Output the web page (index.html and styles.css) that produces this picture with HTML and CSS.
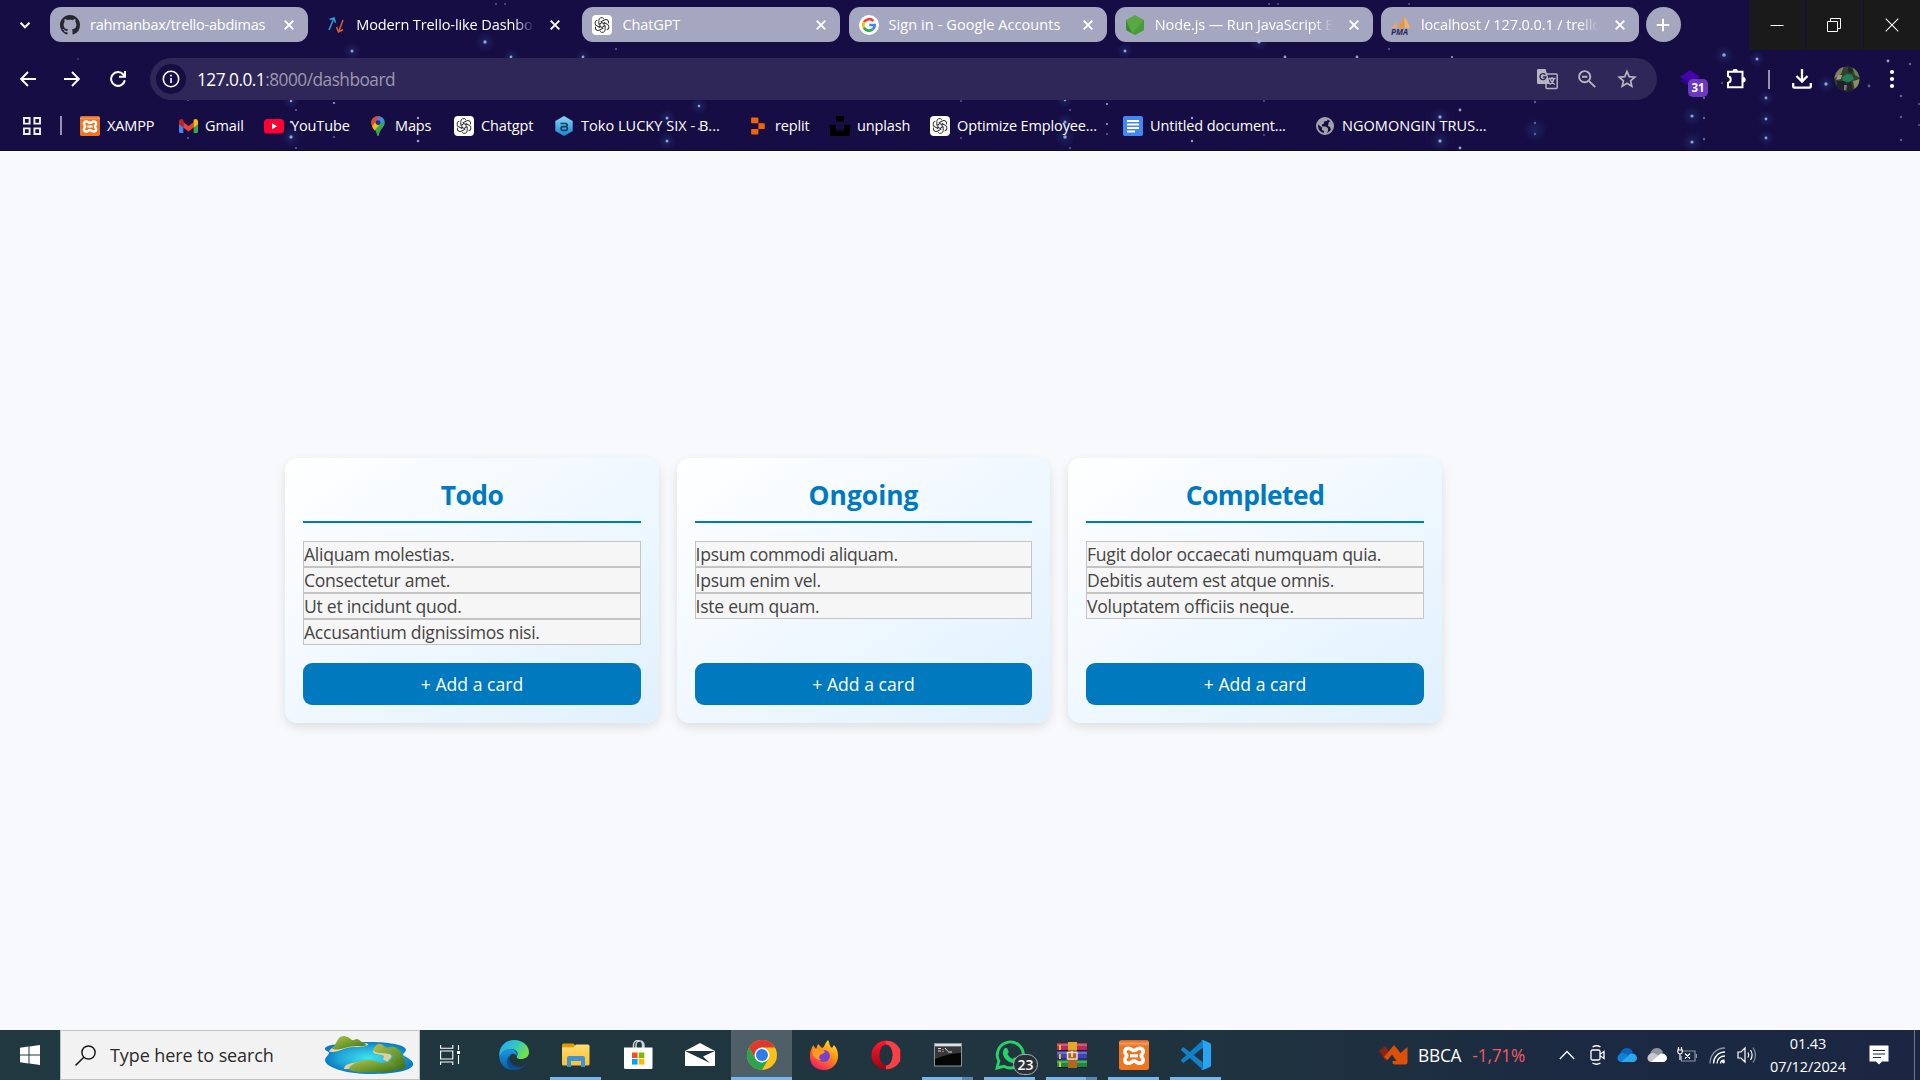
FILE: index.html
```
<!DOCTYPE html>
<html lang="en">
<head>
<meta charset="utf-8">
<title>Modern Trello-like Dashboard</title>
<link rel="stylesheet" href="styles.css">
</head>
<body>
<svg class="defs" width="0" height="0">
  <defs>
    <radialGradient id="glow"><stop offset="0" stop-color="#2f6fc0" stop-opacity=".22"/><stop offset="1" stop-color="#2f6fc0" stop-opacity="0"/></radialGradient>
    <linearGradient id="edge1" x1="0" y1="0" x2="1" y2=".4"><stop offset="0" stop-color="#2aa8ec"/><stop offset=".55" stop-color="#2fc5c8"/><stop offset="1" stop-color="#6fe04a"/></linearGradient>
    <linearGradient id="edge2" x1="0" y1="0" x2="0" y2="1"><stop offset="0" stop-color="#1a9be0"/><stop offset="1" stop-color="#0c58a8"/></linearGradient>
    <linearGradient id="fire" x1=".8" y1="0" x2=".2" y2="1"><stop offset="0" stop-color="#ffe226"/><stop offset=".45" stop-color="#ff8a16"/><stop offset="1" stop-color="#f5156c"/></linearGradient>
    <linearGradient id="opera" x1="0" y1="0" x2="0" y2="1"><stop offset="0" stop-color="#ff1b2d"/><stop offset="1" stop-color="#a70014"/></linearGradient>
    <linearGradient id="folder" x1="0" y1="0" x2="0" y2="1"><stop offset="0" stop-color="#ffdd73"/><stop offset="1" stop-color="#fbc02f"/></linearGradient>
    <linearGradient id="xamppbg" x1="0" y1="0" x2="0" y2="1"><stop offset="0" stop-color="#d5601c"/><stop offset=".12" stop-color="#f39a5c"/><stop offset=".2" stop-color="#ef7420"/><stop offset="1" stop-color="#f0751c"/></linearGradient>
    <radialGradient id="water"><stop offset="0" stop-color="#3fe4ea"/><stop offset=".7" stop-color="#1fa5d8"/><stop offset="1" stop-color="#0b7cc4"/></radialGradient>
    <linearGradient id="hill" x1="0" y1="0" x2="1" y2="1"><stop offset="0" stop-color="#b5c050"/><stop offset=".6" stop-color="#66962b"/><stop offset="1" stop-color="#3f6a1a"/></linearGradient>
    <linearGradient id="toko" x1="0" y1="0" x2="0" y2="1"><stop offset="0" stop-color="#8fd6f5"/><stop offset="1" stop-color="#1287cf"/></linearGradient>
    <symbol id="close" viewBox="0 0 12 12"><path d="M1.7 1.7l8.6 8.6M10.3 1.7l-8.6 8.6" stroke="#fff" stroke-width="1.9" fill="none"/></symbol>
    <symbol id="gpt" viewBox="0 0 20 20">
      <rect width="20" height="20" rx="4" fill="#fff"/>
      <g fill="none" stroke="#2a2a2a" stroke-width=".95" stroke-linejoin="round">
        <path d="M10 7.6L6.8 9.4V5.6A2.9 2.9 0 0 1 11.9 3.6"/>
        <path d="M10 7.6L6.8 9.4V5.6A2.9 2.9 0 0 1 11.9 3.6" transform="rotate(60 10 10)"/>
        <path d="M10 7.6L6.8 9.4V5.6A2.9 2.9 0 0 1 11.9 3.6" transform="rotate(120 10 10)"/>
        <path d="M10 7.6L6.8 9.4V5.6A2.9 2.9 0 0 1 11.9 3.6" transform="rotate(180 10 10)"/>
        <path d="M10 7.6L6.8 9.4V5.6A2.9 2.9 0 0 1 11.9 3.6" transform="rotate(240 10 10)"/>
        <path d="M10 7.6L6.8 9.4V5.6A2.9 2.9 0 0 1 11.9 3.6" transform="rotate(300 10 10)"/>
      </g>
    </symbol>
    <symbol id="xampp" viewBox="0 0 30 30">
      <rect width="30" height="30" rx="2.5" fill="url(#xamppbg)"/>
      <path d="M9.5 8.2c2.800 0 3.300 2.300 5.500 2.300s2.700-2.300 5.500-2.300c2.500 0 3.700 1.700 3.700 3.600 0 2-1.900 2.400-1.900 4s1.900 2 1.900 4c0 1.900-1.200 3.500-3.700 3.500-2.800 0-3.300-2.300-5.500-2.300s-2.700 2.300-5.500 2.300c-2.500 0-3.700-1.600-3.700-3.500 0-2 1.900-2.400 1.900-4s-1.900-2-1.900-4c0-1.900 1.200-3.600 3.700-3.600z" fill="none" stroke="#fff" stroke-width="3.6"/>
      <path d="M11 15.800h8" stroke="#fff" stroke-width="3.2"/>
    </symbol>
  </defs>
</svg>

<header class="browser">
  <svg class="stars" width="1920" height="151" viewBox="0 0 1920 151">
    <g fill="url(#glow)">
      <circle cx="352" cy="51" r="9"/><circle cx="485" cy="42" r="10"/><circle cx="511" cy="57" r="8"/><circle cx="583" cy="57" r="8"/><circle cx="291" cy="101" r="8"/><circle cx="291" cy="137" r="10"/><circle cx="699" cy="106" r="9"/><circle cx="667" cy="118" r="9"/><circle cx="667" cy="141" r="9"/><circle cx="1065" cy="100" r="8"/><circle cx="1065" cy="122" r="9"/><circle cx="1065" cy="137" r="10"/><circle cx="1125" cy="51" r="8"/><circle cx="1259" cy="42" r="9"/><circle cx="1440" cy="117" r="10"/><circle cx="1440" cy="141" r="10"/><circle cx="1724" cy="55" r="10"/><circle cx="1757" cy="59" r="8"/><circle cx="1692" cy="116" r="10"/><circle cx="1692" cy="142" r="10"/><circle cx="1766" cy="98" r="8"/><circle cx="1766" cy="119" r="8"/><circle cx="1766" cy="138" r="8"/><circle cx="1826" cy="84" r="9"/><circle cx="1535" cy="130" r="12"/>
    </g>
    <g fill="#9a9fd2">
      <circle cx="352" cy="51" r="1.500"/><circle cx="485" cy="42" r="1.700"/><circle cx="511" cy="57" r="1.400"/><circle cx="583" cy="57" r="1.400"/><circle cx="291" cy="101" r="1.300"/><circle cx="291" cy="137" r="1.700"/><circle cx="291" cy="122" r="1.300"/><circle cx="418" cy="118" r="1.200"/><circle cx="418" cy="141" r="1.300"/><circle cx="334" cy="103" r="1.100"/><circle cx="699" cy="106" r="1.300"/><circle cx="667" cy="118" r="1.500"/><circle cx="667" cy="141" r="1.500"/><circle cx="699" cy="129" r="1.200"/><circle cx="1065" cy="100" r="1.300"/><circle cx="1065" cy="122" r="1.600"/><circle cx="1065" cy="137" r="1.700"/><circle cx="1125" cy="51" r="1.500"/><circle cx="1107" cy="104" r="1.100"/><circle cx="1107" cy="124" r="1.100"/><circle cx="1192" cy="118" r="1.200"/><circle cx="1192" cy="141" r="1.200"/><circle cx="1259" cy="42" r="1.600"/><circle cx="1285" cy="57" r="1.400"/><circle cx="1357" cy="57" r="1.400"/><circle cx="1440" cy="117" r="1.700"/><circle cx="1440" cy="141" r="1.700"/><circle cx="1460" cy="110" r="1.400"/><circle cx="1460" cy="148" r="1.400"/><circle cx="1452" cy="57" r="1.100"/><circle cx="1724" cy="55" r="1.800"/><circle cx="1757" cy="59" r="1.500"/><circle cx="1692" cy="116" r="1.600"/><circle cx="1692" cy="142" r="1.600"/><circle cx="1766" cy="98" r="1.400"/><circle cx="1766" cy="119" r="1.400"/><circle cx="1766" cy="138" r="1.400"/><circle cx="1888" cy="61" r="1.400"/><circle cx="1826" cy="84" r="1.700"/>
    </g>
    <g fill="#5c5f9c">
      <circle cx="188" cy="100" r="1"/><circle cx="188" cy="138" r="1.100"/><circle cx="334" cy="137" r="1.100"/><circle cx="296" cy="110" r="1.100"/><circle cx="296" cy="148" r="1.100"/><circle cx="78" cy="59" r=".8"/><circle cx="616" cy="49" r="1.100"/><circle cx="1389" cy="49" r="1.100"/><circle cx="1070" cy="110" r="1.100"/><circle cx="1070" cy="148" r="1.100"/><circle cx="961" cy="101" r=".9"/><circle cx="961" cy="138" r=".9"/><circle cx="1107" cy="134" r="1.100"/><circle cx="1264" cy="101" r=".9"/><circle cx="1264" cy="135" r=".9"/><circle cx="1269" cy="4" r=".9"/><circle cx="1278" cy="4" r=".9"/><circle cx="1409" cy="4" r=".9"/><circle cx="496" cy="4" r=".9"/><circle cx="505" cy="4" r=".9"/><circle cx="1535" cy="102" r="1.200"/><circle cx="1535" cy="123" r="1.200"/><circle cx="1535" cy="134" r="1.200"/><circle cx="1704" cy="118" r="1.200"/><circle cx="1704" cy="139" r="1.200"/><circle cx="1704" cy="98" r="1.200"/><circle cx="1722" cy="83" r="1"/><circle cx="1869" cy="86" r="1.400"/><circle cx="1910" cy="64" r="1.300"/><circle cx="1901" cy="96" r="1.300"/><circle cx="1901" cy="117" r="1.200"/><circle cx="1901" cy="140" r="1.200"/><circle cx="1919" cy="104" r="1"/><circle cx="1919" cy="125" r="1"/>
    </g>
  </svg>

  <div class="tabstrip">
    <div class="tab-search"><svg width="14" height="14" viewBox="0 0 14 14"><path d="M2.500 4.800L7 9.300l4.500-4.500" fill="none" stroke="#fff" stroke-width="2"/></svg></div>
    <div class="tabs">
      <div class="tab">
        <svg class="fav" viewBox="0 0 16 16"><path fill="#24292f" d="M8 0C3.580 0 0 3.580 0 8c0 3.540 2.290 6.530 5.470 7.590.4.070.55-.17.55-.38 0-.19-.010-.82-.010-1.490-2.010.37-2.530-.49-2.690-.94-.090-.23-.48-.94-.82-1.130-.28-.15-.68-.52-.010-.53.63-.010 1.080.58 1.230.82.72 1.210 1.870.87 2.330.66.070-.52.28-.87.51-1.070-1.780-.2-3.640-.89-3.640-3.950 0-.87.31-1.590.82-2.150-.080-.2-.36-1.020.080-2.120 0 0 .67-.21 2.200.82.640-.18 1.320-.27 2-.27s1.360.090 2 .27c1.530-1.040 2.200-.82 2.200-.82.440 1.100.16 1.920.080 2.120.51.560.82 1.270.82 2.150 0 3.070-1.870 3.750-3.650 3.950.29.25.54.73.54 1.480 0 1.070-.010 1.930-.010 2.200 0 .21.15.46.55.38A8.010 8.010 0 0 0 16 8c0-4.420-3.580-8-8-8z"/></svg>
        <span class="tab-title snug">rahmanbax/trello-abdimas</span><svg class="x"><use href="#close"/></svg>
      </div>
      <div class="tab active">
        <svg class="fav" viewBox="0 0 20 20" fill="none" stroke-width="1.500"><path d="M3 15L8 3M3.600 4.500L8 3l1.500 4.800" stroke="#28a3d0"/><path d="M17 5l-4.500 12M10.500 12l2 5 4.500-2.500" stroke="#d85f33"/></svg>
        <span class="tab-title fade">Modern Trello-like Dashboard</span><svg class="x"><use href="#close"/></svg>
      </div>
      <div class="tab">
        <svg class="fav"><use href="#gpt"/></svg>
        <span class="tab-title">ChatGPT</span><svg class="x"><use href="#close"/></svg>
      </div>
      <div class="tab">
        <svg class="fav" viewBox="0 0 20 20" fill="none" stroke-width="2.700"><circle cx="10" cy="10" r="10" fill="#fff"/><path d="M14.300 6A5.800 5.800 0 0 0 5 7.200" stroke="#ea4335"/><path d="M5 7.200a5.800 5.800 0 0 0 0 5.600" stroke="#fbbc05"/><path d="M5 12.800a5.800 5.800 0 0 0 8.800 1.500" stroke="#34a853"/><path d="M13.800 14.300A5.600 5.600 0 0 0 15.700 10H10.300" stroke="#4285f4"/></svg>
        <span class="tab-title wide">Sign in - Google Accounts</span><svg class="x"><use href="#close"/></svg>
      </div>
      <div class="tab">
        <svg class="fav" viewBox="0 0 20 20"><path d="M10 0l9 5v10l-9 5-9-5V5z" fill="#58a942"/><path d="M1 5l6.500 13.600L1 15z" fill="#3c8a38"/><path d="M19 5L7.500 18.600 10 20l9-5z" fill="#489a3c"/></svg>
        <span class="tab-title fade">Node.js — Run JavaScript Everywhere</span><svg class="x"><use href="#close"/></svg>
      </div>
      <div class="tab">
        <svg class="fav pma" viewBox="0 0 20 20"><path d="M5.500 4.500C5.500 8 3.500 11 1 13h5z" fill="#f3a64a"/><path d="M12 0c0 5-2.500 10-5 13h6z" fill="#f6941e"/><path d="M13 2c3 3 5 7 6 11h-5z" fill="#f7b260"/><text x="0" y="19.500" class="pma-text">PMA</text></svg>
        <span class="tab-title fade">localhost / 127.0.0.1 / trello_abdimas</span><svg class="x"><use href="#close"/></svg>
      </div>
    </div>
    <div class="new-tab"><svg width="14" height="14" viewBox="0 0 14 14"><path d="M7 .8v12.400M.8 7h12.400" stroke="#fff" stroke-width="2"/></svg></div>
    <div class="window-controls">
      <div><svg width="14" height="14" viewBox="0 0 14 14"><path d="M.5 7.500h13" stroke="#fff"/></svg></div>
      <div><svg width="14" height="14" viewBox="0 0 14 14" fill="none" stroke="#fff"><path d="M.5 3.500h10v10H.5zM3.500 3.500v-3h10v10h-3"/></svg></div>
      <div><svg width="14" height="14" viewBox="0 0 14 14"><path d="M.7.7l12.600 12.600M13.300.7L.7 13.300" stroke="#fff" stroke-width="1.100"/></svg></div>
    </div>
  </div>

  <div class="toolbar">
    <div class="nav"><svg width="16" height="16" viewBox="0 0 16 16" fill="none" stroke="#fff" stroke-width="1.900"><path d="M16 8H1.500M8 1L1.200 8 8 15"/></svg></div>
    <div class="nav"><svg width="16" height="16" viewBox="0 0 16 16" fill="none" stroke="#fff" stroke-width="1.900"><path d="M0 8h14.500M8 1l6.800 7L8 15"/></svg></div>
    <div class="nav reload"><svg width="16" height="16" viewBox="0 0 16 16" fill="none" stroke="#fff" stroke-width="2"><path d="M14.800 9.200a6.900 6.900 0 1 1-1.500-5.700L15 5.400M15 0v5.800H9"/></svg></div>
    <div class="omnibox">
      <div class="info"><svg width="18" height="18" viewBox="0 0 18 18"><circle cx="9" cy="9" r="7.700" fill="none" stroke="#fff" stroke-width="1.600"/><path d="M9 8v5M9 4.800v1.800" stroke="#fff" stroke-width="1.600"/></svg></div>
      <div class="url">127.0.0.1<span>:8000/dashboard</span></div>
      <div class="omni-icon"><svg width="21" height="21" viewBox="0 0 21 21"><rect x="9" y="5" width="11.200" height="14.500" rx="1" fill="none" stroke="#b8b5c2" stroke-width="1.500"/><path d="M1.500 0h7l4.600 15H1.500A1.300 1.300 0 0 1 0 13.700V1.300A1.300 1.300 0 0 1 1.500 0z" fill="#b8b5c2"/><path d="M8.300 5.700A3 3 0 1 0 9 8H6" fill="none" stroke="#2e2757" stroke-width="1.400"/><path d="M11.500 9.500h7M15 8v1.500M17 9.500c-.7 3-2.500 5-4.500 6M13 10c1 2.500 2.500 4 4.800 5.500" fill="none" stroke="#b8b5c2" stroke-width="1.300"/></svg></div>
      <div class="omni-icon"><svg width="18" height="18" viewBox="0 0 18 18" fill="none" stroke="#b8b5c2" stroke-width="1.900"><circle cx="6.700" cy="6.700" r="5.600"/><path d="M10.800 10.800l6.400 6.400M4 6.700h5.400"/></svg></div>
      <div class="omni-icon"><svg width="20" height="20" viewBox="0 0 20 20" fill="none" stroke="#b8b5c2" stroke-width="1.700"><path d="M10 2.500l2.200 5.100 5.600.5-4.200 3.700 1.200 5.400-4.800-2.900-4.800 2.900 1.200-5.400L2.200 8.100l5.600-.5z"/></svg></div>
    </div>
    <div class="ext"><svg width="20" height="16" viewBox="0 0 20 16"><path d="M0 11l10-6 10 6-10 5z" fill="#240b88"/><path d="M10 0l10 7-10 6L0 7z" fill="#4406aa"/></svg><span class="ext-count">31</span></div>
    <div class="puzzle"><svg width="21" height="21" viewBox="0 0 21 21"><path d="M2 2.800h14.500v15.400H2v-4.400c3.600-.5 3.600-6.100 0-6.600z" fill="none" stroke="#fff" stroke-width="2"/><path d="M6.500 2.500a2.700 2.700 0 0 1 5.400 0zM17 8a2.700 2.700 0 0 1 0 5.400z" fill="#fff"/></svg></div>
    <div class="sep"></div>
    <div class="download"><svg width="20" height="20" viewBox="0 0 20 20" fill="none" stroke="#fff" stroke-width="2.300"><path d="M10 0v12M4.500 7l5.500 5.500L15.500 7M1.200 14v3.500q0 1.200 1.200 1.200h15.200q1.200 0 1.200-1.200V14"/></svg></div>
    <div class="avatar"><svg width="26" height="26" viewBox="0 0 26 26"><clipPath id="face"><circle cx="13" cy="13" r="12.500"/></clipPath><g clip-path="url(#face)"><rect width="26" height="26" fill="#34402e"/><path d="M0 0h10l-3 8-7 5z" fill="#80805a"/><path d="M18 0h8v12l-5-3z" fill="#68845a"/><path d="M14 1l5 2-1 4-4-1z" fill="#1b2a1c"/><path d="M8 11l5-3 5 1 2 4-5 3-6-1z" fill="#1f7f58"/><path d="M3 15l7 0 3 4-3 7H3z" fill="#20212c"/><path d="M13 17l4-1 2 10h-6z" fill="#24222c"/><path d="M19 15l7-2v9l-5 3z" fill="#829262"/><path d="M4 9l4 0-1 4-5 1z" fill="#a49584"/><path d="M10 19l3 0-1 5h-2z" fill="#7f776c"/></g></svg></div>
    <div class="menu"><svg width="6" height="20" viewBox="0 0 6 20" fill="#fff"><circle cx="3" cy="3" r="2.100"/><circle cx="3" cy="10" r="2.100"/><circle cx="3" cy="17" r="2.100"/></svg></div>
  </div>

  <div class="bookmarks">
    <div class="apps"><svg width="18" height="18" viewBox="0 0 18 18" fill="none" stroke="#f4f2fb" stroke-width="1.900"><path d="M1 1h5.600v5.600H1zM11.400 1H17v5.600h-5.600zM1 11.400h5.600V17H1zM11.400 11.400H17V17h-5.600z"/></svg><i></i></div>
    <div class="bm"><svg width="20" height="20"><use href="#xampp"/></svg>XAMPP</div>
    <div class="bm"><svg width="19" height="20" viewBox="0 0 19 20"><path d="M0 5h4.300v12H1.500A1.500 1.500 0 0 1 0 15.500z" fill="#4285f4"/><path d="M14.700 5H19v10.500a1.500 1.500 0 0 1-1.500 1.500h-2.800z" fill="#34a853"/><path d="M4.300 6l5.200 4 5.200-4v5.500l-5.200 4-5.200-4z" fill="#ea4335"/><path d="M0 5.500C0 3 2.500 2.300 4.300 3.700V11.500L0 8.200z" fill="#c5221f"/><path d="M19 5.500c0-2.500-2.500-3.200-4.300-1.800v7.800L19 8.200z" fill="#fbbc04"/></svg>Gmail</div>
    <div class="bm"><svg width="20" height="20" viewBox="0 0 20 20"><rect y="3" width="20" height="14.500" rx="3.500" fill="#ff0033"/><path d="M8 7.200v6l5-3z" fill="#fff"/></svg>YouTube</div>
    <div class="bm"><svg width="20" height="20" viewBox="0 0 20 20"><path d="M3.200 6.500C3.200 3 6.200.3 10 .3s6.800 2.700 6.800 6.200c0 4.800-5.200 6.500-6 13.200h-1.600C8.400 13 3.200 11.300 3.200 6.500z" fill="#34a853"/><path d="M4 9.500L9 3l2.500 6-5 5.500C5.300 13 4.400 11.500 4 9.500z" fill="#fbbc04"/><path d="M5 2.500A7 7 0 0 1 12 .6L4.300 10C3 7.500 3 4.600 5 2.500z" fill="#ea4335"/><path d="M12 .6a6.800 6.800 0 0 1 4.300 3.400L11 9.500 7 6z" fill="#4285f4"/><circle cx="10" cy="6.600" r="2.400" fill="#1b2f86"/></svg>Maps</div>
    <div class="bm"><svg width="20" height="20"><use href="#gpt"/></svg>Chatgpt</div>
    <div class="bm loose"><svg width="20" height="20" viewBox="0 0 20 20"><path d="M10 0l8.700 5v10L10 20l-8.700-5V5z" fill="url(#toko)"/><path d="M6.500 7.500h5.500q2.200 1.200.5 3 1.800 2 0 3.800H8q-2-1.800 0-3.600h4" fill="none" stroke="#0b3f66" stroke-width="1.700"/></svg>Toko LUCKY SIX - B...</div>
    <div class="bm"><svg width="20" height="20" viewBox="0 0 20 20" fill="#f26207"><path d="M4 1.500h5.500q.9 0 .9.900v4.900H4q-.9 0-.9-.9v-4q0-.9.900-.9zM10.400 7.300h5.500q.9 0 .9.900v4q0 .9-.9.900h-5.500zM4 13.100h6.400v4.500q0 .9-.9.900H4q-.9 0-.9-.9v-3.600q0-.9.900-.9z"/></svg>replit</div>
    <div class="bm"><svg width="20" height="20" viewBox="0 0 20 20" fill="#000"><path d="M6 0h8v5.500H6zM0 9h6v5.500h8V9h6v11H0z"/></svg>unplash</div>
    <div class="bm"><svg width="20" height="20"><use href="#gpt"/></svg>Optimize Employee...</div>
    <div class="bm"><svg width="20" height="20" viewBox="0 0 20 20"><rect width="20" height="20" rx="1.800" fill="#4486f4"/><path d="M4 5h12M4 8.500h12M4 12h12M4 15.500h8" stroke="#fff" stroke-width="1.900"/></svg>Untitled document...</div>
    <div class="bm loose"><svg width="20" height="20" viewBox="0 0 20 20"><circle cx="10" cy="10" r="8" fill="none" stroke="#a2a2aa" stroke-width="2"/><path d="M2.500 6.500L5 3l5-1.500 3 1-1 2.500-3 .5v2l-2 1v2h4l2 2v2.500L11 18H9v-3l-2-1v-2.500L2.500 8zM15 5l3 4v4l-2 1-1-3-2-1 .5-3z" fill="#a2a2aa"/></svg>NGOMONGIN TRUS...</div>
  </div>
</header>

<main class="page">
  <div class="board">
    <section class="card">
      <h2>Todo</h2>
      <ul><li>Aliquam molestias.</li><li>Consectetur amet.</li><li>Ut et incidunt quod.</li><li>Accusantium dignissimos nisi.</li></ul>
      <button>+ Add a card</button>
    </section>
    <section class="card">
      <h2 class="open">Ongoing</h2>
      <ul><li>Ipsum commodi aliquam.</li><li>Ipsum enim vel.</li><li>Iste eum quam.</li></ul>
      <button>+ Add a card</button>
    </section>
    <section class="card">
      <h2>Completed</h2>
      <ul><li>Fugit dolor occaecati numquam quia.</li><li>Debitis autem est atque omnis.</li><li>Voluptatem officiis neque.</li></ul>
      <button>+ Add a card</button>
    </section>
  </div>
</main>

<footer class="taskbar">
  <div class="start"><svg width="20" height="20" viewBox="0 0 20 20" fill="#fff"><path d="M0 2.800L8.500 1.600V9.500H0zM9.500 1.500L20 0v9.500H9.500zM0 10.500h8.500v7.900L0 17.200zM9.500 10.500H20V20L9.500 18.500z"/></svg></div>
  <div class="search">
    <svg width="21" height="21" viewBox="0 0 21 21" fill="none" stroke="#1a1a1a" stroke-width="1.500"><circle cx="13.500" cy="7.500" r="6.600"/><path d="M8.800 12.200L.6 20.400"/></svg>
    <span>Type here to search</span>
    <svg class="lagoon" width="90" height="40" viewBox="0 0 90 40"><path d="M1 13C5 8 18 10 30 8s45-1 51 5c3 3-2 5-2 7 5 3 11 6 10 10-2 6-20 9-42 9-26 0-46-7-46-14 0-3 4-5 4-7s-5-2-4-5z" fill="url(#water)"/><path d="M6 15c4-5 14-7 22-6s15-2 16 0-6 3-14 3-16 5-21 5-4-1-3-2z" fill="#ecd6a5"/><path d="M8 14C13 9 13 1 20 1c5 0 7 5 10 4 4-3 6 1 9 3 5 2 4 3-3 3-11-1-20 5-28 3z" fill="url(#hill)"/><path d="M20 34c0-5 9-7 18-7-4 2-10 3-12 7z" fill="#e6cd98"/><path d="M49 15c3 4 14 2 18 5 2 3-4 5-3 7l-4-2c-3-2 3-4-2-5s-10-1-9-5z" fill="#e6cd98"/><path d="M50 13c4-6 8-5 11-1 4 2 5-1 9 0 6 1 11 12 12 18 0 4-5 6-8 5l-9-7c-1-2 4-4 4-7s-6-3-12-3-9-3-7-5z" fill="url(#hill)"/><path d="M25 33c3-5 12-8 20-8s10 5 18 2c5-1 10 3 10 6 0 4-12 5-26 4-14 1-23-1-22-4z" fill="url(#hill)"/></svg>
  </div>
  <div class="taskview"><svg width="20" height="20" viewBox="0 0 20 20" fill="none" stroke="#fff" stroke-width="1.100"><path d="M.6 0v3.300h12.200V0M.6 6h12.200v8H.6zM.6 20v-3h12.200v3M18.500 0v5M18.500 10v9"/><path d="M17 6h3v3h-3z" fill="#fff" stroke="none"/></svg></div>
  <div class="apps-row">
    <div class="app"><svg width="30" height="30" viewBox="0 0 30 30"><path d="M1 19C-2 8 6 0 15 0c9 0 15 6 15 12 0 5-4 7-8 7-3 0-5-1-4-3 2-3-1-7-6-7C6 9 1 13 1 19z" fill="url(#edge1)"/><path d="M1 19C1 12 6 8.500 11 9c5 .2 8 4 6.500 7C15 12 10 14 10 19c0 6 5 11 10 10.500C11 32 1 28 0 16z" fill="url(#edge2)"/><path d="M11 15c-3 6 3 12 9 12 4 0 6-2 8-5-2 5-7 8-13 8-6-1-10-9-4-15z" fill="#0d4d8f"/></svg></div>
    <div class="app run"><svg width="28" height="26" viewBox="0 0 28 26"><path d="M0 3q0-1.500 1.500-1.500H11q1 0 1.500 1L14 5v6H0z" fill="#e09a08"/><path d="M0 6q0-.8 1-.8h10.500L14 2.500h12q1.500 0 1.500 1.500v18q0 1.500-1.500 1.500H1.500Q0 23.500 0 22z" fill="url(#folder)"/><path d="M5 25V16q0-2 2-2h14q2 0 2 2v9h-4v-6H9v6z" fill="#3f93d2"/></svg></div>
    <div class="app"><svg width="30" height="30" viewBox="0 0 30 30"><path d="M10.500 8V5a4 4 0 0 1 9 0v3M13 8V5a3.500 3.500 0 0 1 8 0v3" fill="none" stroke="#cdd3d6" stroke-width="1.500"/><path d="M1 7.500h28.500V27.500q0 1.500-1.500 1.500H2.500Q1 29 1 27.500z" fill="#fff"/><path d="M9 12.500h5.600v5.600H9z" fill="#f25022"/><path d="M15.700 12.500h5.600v5.600h-5.600z" fill="#7fba00"/><path d="M9 19h5.600v5.600H9z" fill="#00a4ef"/><path d="M15.700 19h5.600v5.600h-5.600z" fill="#ffb900"/></svg></div>
    <div class="app"><svg width="30" height="26" viewBox="0 0 30 26"><path d="M0 9L15 1l15 8v15H0z" fill="#fff"/><path d="M0 9h30l-12 5.500L25 21z" fill="#1f353f"/></svg></div>
    <div class="app run current"><svg width="30" height="30" viewBox="0 0 30 30"><circle cx="15" cy="15" r="15" fill="#fbc116"/><path d="M2 7.500A15 15 0 0 1 28 7.500H15L8.500 18.700z" fill="#dc3a2f"/><path d="M2 7.500A15 15 0 0 0 15 30l6.500-11.200H8.500z" fill="#2fa34c"/><circle cx="15" cy="15" r="7.500" fill="#fff"/><circle cx="15" cy="15" r="6" fill="#2e7bea"/></svg></div>
    <div class="app"><svg width="30" height="30" viewBox="0 0 30 30"><path d="M2 10l2-5 3 4 2-5 4 4c2 0 3-5 6-8 2 3 1 6 4 8l2-3c3 3 4 7 4 11 0 8-6 14-14 14S1 25 1 17c0-3 0-5 1-7z" fill="url(#fire)"/><circle cx="15" cy="16" r="6" fill="#7a42cc"/><path d="M4 9c5-1 7 2 10 1 3 1 2 3-1 4-3 1-4 4-1 6-6 0-10-5-8-11z" fill="#ff9a22"/></svg></div>
    <div class="app"><svg width="30" height="30" viewBox="0 0 30 30"><ellipse cx="15" cy="15" rx="14.500" ry="14.300" fill="url(#opera)"/><path d="M15 .7q9-.2 14.200 8.300v12Q24 29.500 15 29.300z" fill="#fb3f46"/><ellipse cx="15" cy="15" rx="6.600" ry="10.500" fill="#1f3440"/></svg></div>
    <div class="app run multi"><svg width="28" height="24" viewBox="0 0 28 24"><rect x=".5" y=".5" width="27" height="22.500" fill="#050505" stroke="#8d9699"/><path d="M1 1h26v2.500H1z" fill="#dde2e5"/><path d="M1 4h26v6Q15 10 1 16z" fill="#373737"/><path d="M4 5.500H7M4 8h3M9 6v1M9 8v1M11 5l3 3.500M14 9h4" stroke="#ddd" stroke-width="1"/></svg></div>
    <div class="app run"><svg width="30" height="30" viewBox="0 0 30 30"><path d="M2 28l1.800-7A13 13 0 1 1 9 26.300z" fill="none" stroke="#27d366" stroke-width="2.900"/><path d="M10 8q2-1 3 2l.7 2q-.2 1-1.200 2 2 4 5.500 5 1.200-2 2-1.700l3 1.400q1 .5 0 2.500-1.500 2.600-5 2C12 22 8 17 7.800 13Q7.700 9.500 10 8z" fill="#27d366"/></svg><span class="unread">23</span></div>
    <div class="app run multi"><svg width="30" height="28" viewBox="0 0 30 28"><rect y="2" width="30" height="8" fill="#c02a52"/><rect y="10" width="30" height="9" fill="#3e45b5"/><rect y="19" width="30" height="8" fill="#1c8c3a"/><path d="M0 4h30M0 12h30M0 21h30" stroke="#fff" stroke-opacity=".3" stroke-width="1.500"/><path d="M0 9.500h30M0 18h30M0 26.500h30" stroke="#1b1b35"/><path d="M3 4v5M3 13v5M3 21v5" stroke="#f0c020" stroke-width="2"/><rect x="11" y="1" width="9" height="26" fill="#b7641f"/><rect x="11" y="1" width="9" height="8" fill="#e0aa28"/><rect x="10.500" y="11.500" width="9.500" height="6.500" fill="none" stroke="#e3dfd6" stroke-width="1.500"/><path d="M15 10v6" stroke="#eee" stroke-width="1.500"/></svg></div>
    <div class="app run"><svg width="30" height="30"><use href="#xampp"/></svg></div>
    <div class="app run"><svg width="30" height="30" viewBox="0 0 30 30"><path d="M21.500 8L3 22.500q-1 .5-1.600-.2L.3 21q-.6-.8.2-1.500L22 0v8z" fill="#0d80cc"/><path d="M21.500 22L3 7.500q-1-.5-1.600.2L.3 9q-.6.8.2 1.500L22 30z" fill="#1480c6"/><path d="M22 0l7 3q1 .5 1 1.800v20.400q0 1.300-1 1.800l-7 3q-1.200.2-2-.7 2 .6 2-1.300V2Q22 0 20 .700 20.800-.2 22 0z" fill="#27a5f2"/></svg></div>
  </div>
  <div class="tray">
    <div class="stock"><svg width="29" height="20" viewBox="0 0 29 20"><path d="M0 6l6-5 7 9-6 6z" fill="#8c2415"/><path d="M5 12L15 0l6.500 8L28.500 2v15.500q0 2-2 2H15.500q-2 0-2-2v-1.500h4L13 9.500l-4.500 5.500z" fill="#dd5008"/></svg><span>BBCA</span><b>-1,71%</b></div>
    <div class="ti"><svg width="16" height="10" viewBox="0 0 16 10"><path d="M.8 9L8 1.500 15.200 9" fill="none" stroke="#fff" stroke-width="1.300"/></svg></div>
    <div class="ti"><svg width="16" height="20" viewBox="-1 0 16 20" fill="none" stroke="#fff" stroke-width="1.300"><path d="M2.500 5h6q1.500 0 1.500 1.500v7q0 1.500-1.500 1.500h-6Q1 15 1 13.500v-7Q1 5 2.500 5zM10.500 9L14 6.500v7L10.500 11M2.500 2q4-2.500 8 0M2.500 18q4 2.500 8 0"/></svg></div>
    <div class="ti"><svg width="20" height="14" viewBox="0 0 20 14"><path d="M3 8C3 3 6 0 10 0c3 0 5 2 6 4l-5 6z" fill="#0b62b8"/><path d="M4.500 14C-1 14-1 6 5 5c3-.5 6 2 8 4z" fill="#1280d8"/><path d="M4 14l8-7c2-3 8-1 8 3 0 2-1.500 4-4 4z" fill="#29a8ee"/></svg></div>
    <div class="ti"><svg width="20" height="14" viewBox="0 0 20 14"><path d="M3 8C3 3 6 0 10 0c3 0 5 2 6 4l-5 6z" fill="#8f959f"/><path d="M4.500 14C-1 14-1 6 5 5c3-.5 6 2 8 4z" fill="#c4c7cd"/><path d="M4 14l8-7c2-3 8-1 8 3 0 2-1.500 4-4 4z" fill="#fff"/></svg></div>
    <div class="ti"><svg width="20" height="16" viewBox="0 0 20 16" fill="none" stroke="#fff" stroke-width="1.200"><path d="M6 4h12v10H4.500V9" stroke="#8b94a3"/><path d="M19.500 7v4" stroke="#8b94a3"/><path d="M1.500 0v3M4.500 0v3M.8 3h4.500v2Q5 7 3 7T.8 5zM3 7v6M8 6.500l5 5M13 6.500l-5 5"/></svg></div>
    <div class="ti"><svg width="17" height="17" viewBox="0 0 17 17" fill="none" stroke="#fff" stroke-width="1.300"><path d="M1 16.500C1 8 7 1 16 1" stroke="#8b94a3"/><path d="M4.500 16.500C4.500 10.500 9 5 16 5M8 16.500C8 12.500 11 9 16 9M11.500 16.500q0-3 4-3.500"/><circle cx="14.500" cy="15" r="1.400" fill="#fff" stroke="none"/></svg></div>
    <div class="ti"><svg width="20" height="18" viewBox="0 0 20 18" fill="none" stroke="#fff" stroke-width="1.200"><path d="M1 6h3l4-4v14l-4-4H1zM11 6.500q1.500 2.500 0 5M13.500 4q3.200 5 0 10"/><path d="M16 1.500q5 7.500 0 15" stroke="#8b94a3"/></svg></div>
    <div class="clock"><span>01.43</span><span>07/12/2024</span></div>
    <div class="notice"><svg width="20" height="20" viewBox="0 0 20 20"><path d="M.5.500h19v16h-6.500L10 19.500l-3-3H.5z" fill="#fff"/><path d="M4 5.500h12M4 9h12M4 12.500h8" stroke="#1b2a41" stroke-width="1.200"/></svg></div>
    <div class="show-desktop"></div>
  </div>
</footer>
</body>
</html>
```
FILE: styles.css
```
* { box-sizing: border-box; }
body {
  margin: 0;
  width: 1920px;
  height: 1080px;
  overflow: hidden;
  display: flex;
  flex-direction: column;
  font-family: "Open Sans", "Noto Sans", sans-serif;
}
svg { display: block; flex: none; }
.defs { position: absolute; }

/* Browser chrome */
.browser {
  position: relative;
  flex: none;
  height: 151px;
  background: #170d45;
  color: #fff;
  border-bottom: 1px solid #100736;
}
.stars { position: absolute; left: 0; top: 0; }
.tabstrip, .toolbar, .bookmarks { position: relative; display: flex; }
.tabstrip { height: 50px; }
.tab-search { width: 50px; height: 50px; display: grid; place-items: center; }
.tabs { display: flex; gap: 8.200px; padding-top: 7px; }
.tab {
  display: flex;
  align-items: center;
  width: 258px;
  height: 35px;
  padding: 0 13px 0 10px;
  border-radius: 11px;
  background: rgba(190, 194, 214, .85);
  font-size: 14.500px;
  letter-spacing: -.1px;
}
.tab.active { background: none; }
.fav { width: 20px; height: 20px; margin-right: 10px; }
.tab-title { flex: 1; overflow: hidden; white-space: nowrap; margin-right: 13px; }
.fade { mask-image: linear-gradient(90deg, #000 88%, transparent 99%); }
.snug { letter-spacing: -.24px; }
.wide { letter-spacing: .08px; }
.x { width: 12px; height: 12px; }
.pma-text { font: italic 700 8px "Open Sans", sans-serif; letter-spacing: 0; fill: #29295c; }
.new-tab {
  width: 35px;
  height: 35px;
  margin: 7px 0 0 7px;
  border-radius: 50%;
  background: #a5a7be;
  display: grid;
  place-items: center;
}
.window-controls {
  margin-left: auto;
  display: grid;
  grid-template-columns: 56px 57px 56px;
  gap: 1px;
}
.window-controls div { background: #1a1a1a; display: grid; place-items: center; padding-right: 1px; }

.toolbar { height: 58px; padding-left: 6px; align-items: center; }
.nav { width: 44px; display: grid; place-items: center; }
.reload { width: 48px; }
.reload svg { margin-right: 1px; }
.omnibox {
  display: flex;
  align-items: center;
  width: 1507px;
  height: 42px;
  margin-left: 8px;
  padding: 0 10px 0 6px;
  border-radius: 21px;
  background: #2f2757;
}
.info {
  width: 30px;
  height: 30px;
  border-radius: 50%;
  background: #170d45;
  display: grid;
  place-items: center;
}
.url { flex: 1; margin-left: 11px; font-size: 17.300px; letter-spacing: -.52px; }
.url span { color: #9d98b0; }
.omni-icon { width: 40px; display: grid; place-items: center; }
.ext {
  position: relative;
  width: 46px;
  height: 42px;
  margin-left: 10px;
  display: grid;
  justify-items: center;
  align-items: start;
  padding-top: 12px;
}
.ext-count {
  position: absolute;
  left: 21px;
  top: 21px;
  width: 20px;
  height: 18px;
  border-radius: 5px;
  background: #6b38c0;
  font: 700 11.500px/18px "Open Sans", sans-serif;
  text-align: center;
}
.puzzle { width: 46px; display: grid; place-items: center; }
.sep { width: 2px; height: 19px; margin: 0 12px 0 9px; background: #9793ae; }
.download { width: 40px; display: grid; place-items: center; }
.avatar { width: 50px; display: grid; place-items: center; }
.menu { width: 40px; display: grid; place-items: center; }

.bookmarks {
  height: 35px;
  align-items: center;
  font-size: 14.500px;
  letter-spacing: -.13px;
  display: grid;
  grid-template-columns: 80px 99px 85px 104px 86px 100px 194px 82px 100px 193px 192px 220px;
}
.apps { display: flex; align-items: center; padding-left: 23px; }
.apps i { width: 2px; height: 19px; margin-left: 19px; background: #9793ae; }
.bm { display: flex; align-items: center; gap: 7px; white-space: nowrap; }
.bm svg { margin-top: 1px; }
.loose { letter-spacing: .03px; }

/* Kanban board */
.page { flex: 1; display: flex; align-items: center; padding-left: 285px; background: #f8f9fd; }
.board { width: 1157px; display: grid; grid-template-columns: repeat(3, 1fr); gap: 17.600px; }
.card {
  display: flex;
  flex-direction: column;
  height: 265px;
  padding: 18px;
  border-radius: 13px;
  background: linear-gradient(145deg, #fff 0%, #f0f8ff 50%, #e8f5fe 75%, #e0f0fd 100%);
  box-shadow: 0 4px 11px rgba(0, 0, 0, .11);
}
h2 {
  height: 47px;
  margin: 0 0 18px;
  border-bottom: 2px solid #0079bf;
  color: #0079bf;
  text-align: center;
  font-size: 26.400px;
  line-height: 39px;
  letter-spacing: -.5px;
}
.open { letter-spacing: 0; }
ul { list-style: none; margin: 0; padding: 0; }
li {
  height: 26px;
  border: 1px solid #c4c4c4;
  background: #f6f6f6;
  color: #444;
  font-size: 17.600px;
  line-height: 24px;
  letter-spacing: -.28px;
}
button {
  height: 42px;
  margin-top: auto;
  border: 0;
  border-radius: 9px;
  background: #0079bf;
  color: #fff;
  font-family: inherit;
  font-size: 17.600px;
}

/* Windows taskbar */
.taskbar {
  flex: none;
  height: 50px;
  display: flex;
  background: linear-gradient(90deg, #203840, #20353f 55%, #1e3040 72%, #1b2942 82%, #1b2742);
  color: #fff;
}
.start { width: 60px; display: grid; place-items: center; }
.search {
  width: 360px;
  display: flex;
  align-items: center;
  padding-left: 14px;
  background: #f2f2f2;
  border: 1px solid #bfc1c2;
  color: #2b2b2b;
  font-size: 18px;
  letter-spacing: -.1px;
}
.search span { flex: 1; margin-left: 14px; }
.lagoon { margin-right: 5px; }
.taskview { width: 60px; display: grid; place-items: center; }
.apps-row { display: flex; gap: 1px; margin-left: 3px; }
.app { position: relative; width: 61px; display: grid; place-items: center; }
.run::after {
  content: "";
  position: absolute;
  left: 5px;
  right: 5px;
  bottom: 0;
  height: 3px;
  background: #78b7ee;
}
.current { background: #4e5f67; }
.current::after { left: 0; right: 0; }
.multi::after { background: linear-gradient(90deg, #78b7ee 79%, #5789b5 79%); }
.unread {
  position: absolute;
  left: 34px;
  top: 24px;
  width: 25px;
  height: 21px;
  border: 1px solid #a9afb3;
  border-radius: 11px;
  background: #2a3136;
  font: 600 14px/19px "Open Sans", sans-serif;
  text-align: center;
  z-index: 1;
}
.tray { margin-left: auto; display: flex; align-items: center; }
.stock { display: flex; align-items: center; width: 172px; font-size: 17.300px; letter-spacing: -.2px; }
.stock svg { margin-left: -1px; }
.stock span { margin: 0 11px 0 10px; }
.stock b { font-weight: 400; color: #ee5c62; }
.ti { width: 30px; display: grid; place-items: center; }
.clock {
  width: 92px;
  display: flex;
  flex-direction: column;
  align-items: center;
  font-size: 14.500px;
  line-height: 23px;
  letter-spacing: -.1px;
}
.notice { width: 50px; display: grid; place-items: center; }
.show-desktop { width: 6px; height: 50px; margin-left: 10px; border-left: 1px solid #6c7686; }
```
